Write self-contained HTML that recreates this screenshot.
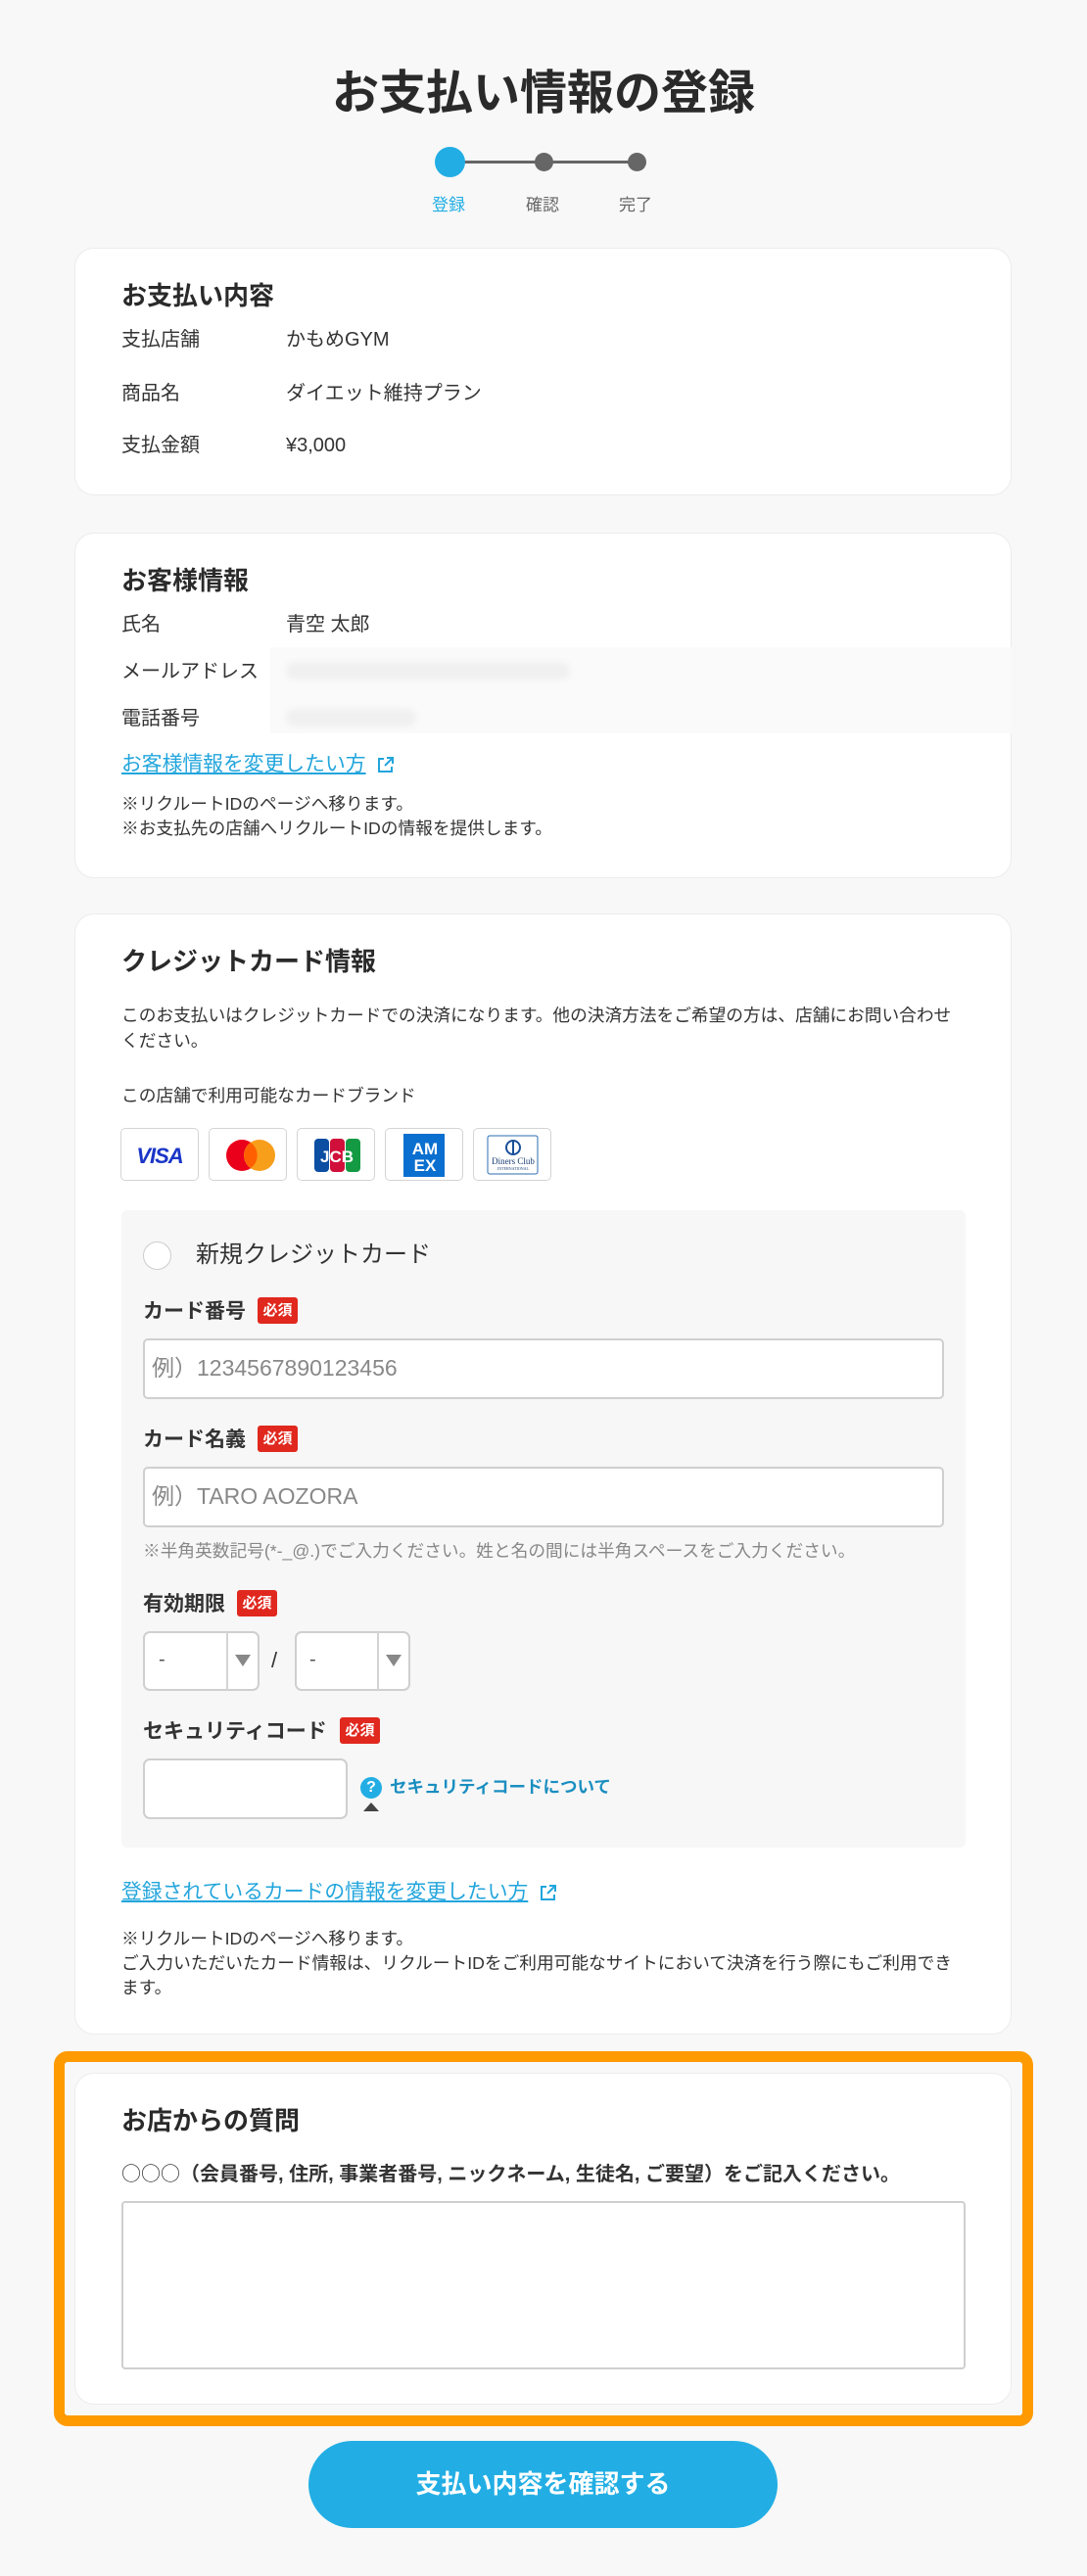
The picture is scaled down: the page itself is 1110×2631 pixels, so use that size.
<!DOCTYPE html>
<html><head><meta charset="utf-8">
<style>
*{margin:0;padding:0;box-sizing:border-box}
body{width:1110px;height:2631px;background:#f8f8f8;position:relative;font-family:"Liberation Sans","Noto Sans CJK JP",sans-serif;color:#333;overflow:hidden}
.a{position:absolute;white-space:nowrap}
.card{position:absolute;left:76px;width:957px;background:#fff;border:1.5px solid #ececec;border-radius:20px}
.t{font-weight:bold;font-size:26px;color:#2a2a2a;line-height:1}
.r{font-size:20px;line-height:1;color:#333}
.n{font-size:17.7px;line-height:1;color:#333}
.lnk{font-size:20.8px;color:#22a5dc;text-decoration:underline;line-height:1}
.lab{font-size:21px;font-weight:bold;line-height:1;color:#333}
.bd{position:absolute;background:#e0281e;color:#fff;font-size:15px;font-weight:bold;border-radius:3px;text-align:center;line-height:27px;height:27px;width:41px}
.inp{position:absolute;background:#fff;border:2px solid #cfcfcf;border-radius:5px}
.ph{font-size:23px;color:#888;line-height:1}
.logo{position:absolute;top:1152px;width:80px;height:54px;background:#fff;border:1.5px solid #d4d4d4;border-radius:5px;overflow:hidden}
</style></head><body>

<div class="a" style="left:0;width:1110px;text-align:center;top:69px;font-size:48px;font-weight:bold;color:#2a2a2a;line-height:54px">お支払い情報の登録</div>
<div class="a" style="left:459px;top:164px;width:191px;height:3px;background:#666"></div>
<div class="a" style="left:444px;top:150px;width:31px;height:31px;border-radius:50%;background:#22aee4"></div>
<div class="a" style="left:546px;top:156px;width:19px;height:19px;border-radius:50%;background:#666"></div>
<div class="a" style="left:641px;top:156px;width:19px;height:19px;border-radius:50%;background:#666"></div>
<div class="a" style="left:441px;top:195px;font-size:17px;color:#22aee4">登録</div>
<div class="a" style="left:537px;top:195px;font-size:17px;color:#666">確認</div>
<div class="a" style="left:632px;top:195px;font-size:17px;color:#666">完了</div>

<div class="card" style="top:253px;height:253px"></div>
<div class="a t" style="left:124px;top:289px">お支払い内容</div>
<div class="a r" style="left:124px;top:337px">支払店舗</div><div class="a r" style="left:292px;top:337px">かもめGYM</div>
<div class="a r" style="left:124px;top:392px">商品名</div><div class="a r" style="left:292px;top:392px">ダイエット維持プラン</div>
<div class="a r" style="left:124px;top:445px">支払金額</div><div class="a r" style="left:292px;top:445px">¥3,000</div>

<div class="card" style="top:544px;height:353px"></div>
<div class="a t" style="left:124px;top:580px">お客様情報</div>
<div class="a r" style="left:124px;top:628px">氏名</div><div class="a r" style="left:292px;top:628px">青空 太郎</div>
<div class="a" style="left:276px;top:661px;width:757px;height:88px;background:#fafafa"></div>
<div class="a" style="left:292px;top:676px;width:290px;height:18px;background:#f0f0f0;border-radius:9px;filter:blur(3px)"></div>
<div class="a" style="left:292px;top:724px;width:133px;height:18px;background:#f0f0f0;border-radius:9px;filter:blur(3px)"></div>
<div class="a r" style="left:124px;top:676px">メールアドレス</div>
<div class="a r" style="left:124px;top:724px">電話番号</div>
<div class="a lnk" style="left:124px;top:771px">お客様情報を変更したい方</div>
<svg class="a" style="left:384px;top:771px" width="20" height="20" viewBox="0 0 20 20" fill="none" stroke="#22a5dc" stroke-width="2"><path d="M8 4H3v13h13v-5"/><path d="M11 3h6v6M17 3l-8 8"/></svg>
<div class="a n" style="left:124px;top:813px">※リクルートIDのページへ移ります。</div>
<div class="a n" style="left:124px;top:838px">※お支払先の店舗へリクルートIDの情報を提供します。</div>

<div class="card" style="top:933px;height:1145px"></div>
<div class="a t" style="left:124px;top:969px">クレジットカード情報</div>
<div class="a n" style="left:124px;top:1029px">このお支払いはクレジットカードでの決済になります。他の決済方法をご希望の方は、店舗にお問い合わせ</div>
<div class="a n" style="left:124px;top:1055px">ください。</div>
<div class="a n" style="left:124px;top:1111px">この店舗で利用可能なカードブランド</div>

<div class="logo" style="left:123px"><div style="text-align:center;margin-top:15px;font:italic bold 22px 'Liberation Sans',sans-serif;color:#1a35c8;letter-spacing:-1px">VISA</div></div>
<div class="logo" style="left:213px"><svg width="80" height="54"><circle cx="33" cy="27" r="16" fill="#eb001b"/><circle cx="51" cy="27" r="16" fill="#f79e1b"/><path d="M42 14a16 16 0 0 1 0 26a16 16 0 0 1 0-26z" fill="#ff5f00"/></svg></div>
<div class="logo" style="left:303px"><svg width="80" height="54"><rect x="17" y="10" width="15" height="34" rx="4" fill="#0b4ea2"/><rect x="33" y="10" width="15" height="34" rx="4" fill="#d0103a"/><rect x="49" y="10" width="15" height="34" rx="4" fill="#139a43"/><text x="40" y="34" text-anchor="middle" font-family="Liberation Sans" font-weight="bold" font-size="17" fill="#fff">JCB</text></svg></div>
<div class="logo" style="left:393px"><svg width="80" height="54"><rect x="18" y="5" width="42" height="44" fill="#0a6fcf"/><text x="40" y="26" text-anchor="middle" font-family="Liberation Sans" font-weight="bold" font-size="17" fill="#fff">AM</text><text x="40" y="43" text-anchor="middle" font-family="Liberation Sans" font-weight="bold" font-size="17" fill="#fff">EX</text></svg></div>
<div class="logo" style="left:483px"><svg width="80" height="54"><rect x="14" y="7" width="51" height="39" rx="2" fill="#fff" stroke="#2b6cb0" stroke-width="1"/><circle cx="40" cy="19" r="7" fill="none" stroke="#1a4f99" stroke-width="2"/><line x1="40" y1="12" x2="40" y2="26" stroke="#1a4f99" stroke-width="2"/><text x="40" y="36" text-anchor="middle" font-family="Liberation Serif" font-size="9" fill="#1a3d73">Diners Club</text><text x="40" y="42" text-anchor="middle" font-family="Liberation Serif" font-size="4" fill="#1a3d73">INTERNATIONAL</text></svg></div>

<div class="a" style="left:124px;top:1236px;width:862px;height:651px;background:#f7f7f7;border-radius:6px"></div>
<div class="a" style="left:146px;top:1268px;width:29px;height:29px;border-radius:50%;border:1.5px solid #ccc;background:#fff"></div>
<div class="a" style="left:200px;top:1270px;font-size:24px;line-height:1;color:#333">新規クレジットカード</div>

<div class="a lab" style="left:146px;top:1329px">カード番号</div><div class="bd" style="left:263px;top:1325px">必須</div>
<div class="inp" style="left:146px;top:1367px;width:818px;height:62px"></div>
<div class="a ph" style="left:155px;top:1386px">例）1234567890123456</div>

<div class="a lab" style="left:146px;top:1460px">カード名義</div><div class="bd" style="left:263px;top:1456px">必須</div>
<div class="inp" style="left:146px;top:1498px;width:818px;height:62px"></div>
<div class="a ph" style="left:155px;top:1517px">例）TARO AOZORA</div>
<div class="a n" style="left:146px;top:1576px;color:#888">※半角英数記号(*-_@.)でご入力ください。姓と名の間には半角スペースをご入力ください。</div>

<div class="a lab" style="left:146px;top:1628px">有効期限</div><div class="bd" style="left:242px;top:1624px">必須</div>
<div class="inp" style="left:146px;top:1666px;width:119px;height:61px;border-radius:7px"></div>
<div class="a" style="left:231px;top:1667px;width:2px;height:59px;background:#d4d4d4"></div>
<div class="a" style="left:162px;top:1684px;font-size:20px;color:#555">-</div>
<div class="a" style="left:240px;top:1690px;width:0;height:0;border-left:8px solid transparent;border-right:8px solid transparent;border-top:12px solid #888"></div>
<div class="a" style="left:277px;top:1683px;font-size:22px;color:#333">/</div>
<div class="inp" style="left:301px;top:1666px;width:118px;height:61px;border-radius:7px"></div>
<div class="a" style="left:385px;top:1667px;width:2px;height:59px;background:#d4d4d4"></div>
<div class="a" style="left:316px;top:1684px;font-size:20px;color:#555">-</div>
<div class="a" style="left:394px;top:1690px;width:0;height:0;border-left:8px solid transparent;border-right:8px solid transparent;border-top:12px solid #888"></div>

<div class="a lab" style="left:146px;top:1758px">セキュリティコード</div><div class="bd" style="left:347px;top:1754px">必須</div>
<div class="inp" style="left:146px;top:1796px;width:209px;height:62px;border-radius:7px"></div>
<div class="a" style="left:368px;top:1815px;width:22px;height:22px;border-radius:50%;background:#22aee4;color:#fff;font-weight:bold;font-size:16px;text-align:center;line-height:22px">?</div>
<div class="a" style="left:371px;top:1841px;width:0;height:0;border-left:8px solid transparent;border-right:8px solid transparent;border-bottom:9px solid #444"></div>
<div class="a" style="left:398px;top:1817px;font-size:17.5px;font-weight:bold;color:#1a8ec0;line-height:1">セキュリティコードについて</div>

<div class="a lnk" style="left:124px;top:1923px">登録されているカードの情報を変更したい方</div>
<svg class="a" style="left:550px;top:1923px" width="20" height="20" viewBox="0 0 20 20" fill="none" stroke="#22a5dc" stroke-width="2"><path d="M8 4H3v13h13v-5"/><path d="M11 3h6v6M17 3l-8 8"/></svg>
<div class="a n" style="left:124px;top:1972px">※リクルートIDのページへ移ります。</div>
<div class="a n" style="left:124px;top:1997px">ご入力いただいたカード情報は、リクルートIDをご利用可能なサイトにおいて決済を行う際にもご利用でき</div>
<div class="a n" style="left:124px;top:2022px">ます。</div>

<div class="a" style="left:55px;top:2095px;width:1000px;height:383px;border:11px solid #ff9a00;border-radius:14px"></div>
<div class="card" style="top:2117px;height:339px"></div>
<div class="a t" style="left:124px;top:2153px">お店からの質問</div>
<div class="a" style="left:124px;top:2209px;font-size:20px;font-weight:bold;line-height:1;color:#333"><span style="font-family:'Noto Sans CJK JP',sans-serif;font-weight:normal">○○○</span>（会員番号, 住所, 事業者番号, ニックネーム, 生徒名, ご要望）をご記入ください。</div>
<div class="inp" style="left:124px;top:2248px;width:862px;height:172px;border-radius:4px"></div>

<div class="a" style="left:315px;top:2493px;width:479px;height:89px;border-radius:45px;background:#22aee4;color:#fff;font-size:26px;font-weight:bold;text-align:center;line-height:89px">支払い内容を確認する</div>
</body></html>
